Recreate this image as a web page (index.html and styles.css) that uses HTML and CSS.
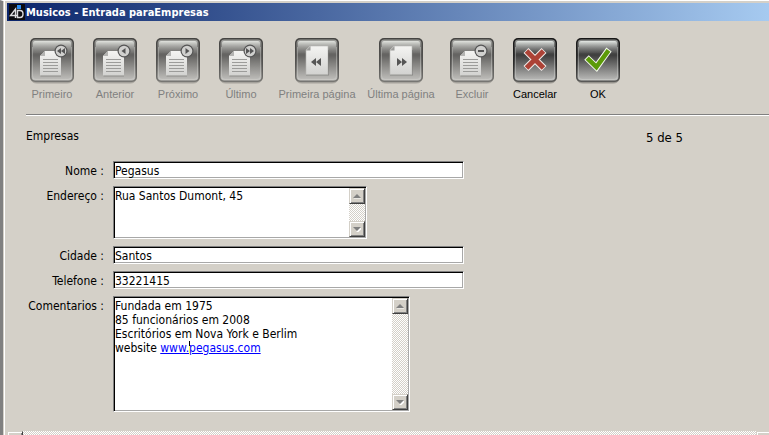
FILE: index.html
```html
<!DOCTYPE html>
<html lang="pt">
<head>
<meta charset="UTF-8" />
<meta name="viewport" content="width=device-width, initial-scale=1" />
<title>Musicos - Entrada paraEmpresas</title>
<link rel="stylesheet" href="styles.css">
</head>
<body>

<!-- shared icon parts -->
<svg class="defs" width="0" height="0" aria-hidden="true">
  <defs>
    <linearGradient id="rim" x1="0" y1="0" x2="0" y2="1">
      <stop offset="0" stop-color="#161616"/>
      <stop offset=".6" stop-color="#2c2c2c"/>
      <stop offset="1" stop-color="#5a5a58"/>
    </linearGradient>
    <linearGradient id="face" x1="0" y1="0" x2="0" y2="1">
      <stop offset="0" stop-color="#8a8c8a"/>
      <stop offset=".38" stop-color="#3e3e3e"/>
      <stop offset="1" stop-color="#bcbcba"/>
    </linearGradient>
    <linearGradient id="shine" x1="0" y1="0" x2="0" y2="1">
      <stop offset="0" stop-color="#e4e8e4"/>
      <stop offset="1" stop-color="#6a6a6a" stop-opacity=".2"/>
    </linearGradient>
    <linearGradient id="paper" x1="0" y1="0" x2="0" y2="1">
      <stop offset="0" stop-color="#f4f4f2"/>
      <stop offset="1" stop-color="#d2d2d0"/>
    </linearGradient>
    <symbol id="tile" viewBox="0 0 44 46">
      <rect x="1" y="3" width="42" height="43" rx="6" fill="#000" opacity=".14"/>
      <rect x="0" y="1" width="44" height="44" rx="6" fill="#000" opacity=".18"/>
      <rect width="44" height="44" rx="5" fill="url(#rim)"/>
      <rect x="1.5" y="1.5" width="41" height="41" rx="4" fill="url(#face)"/>
      <path d="M3 15V5q0-2 2-2h34q2 0 2 2v10z" fill="url(#shine)"/>
      <path d="M2.5 9v29q0 3.500 3.500 3.500h32q3.500 0 3.500-3.500V9" fill="none" stroke="#d8dad6" stroke-opacity=".4"/>
    </symbol>
    <symbol id="sheet" viewBox="0 0 44 46">
      <path d="M10.500 38.500v-20l5-5.500h15.500v25.500z" fill="#000" opacity=".2"/>
      <path d="M10 37.500V18l5-5h16v24.500z" fill="url(#paper)"/>
      <path d="M10 18l5-5v5z" fill="#b4b4b2"/>
      <path d="M13 21.500h15M13 24.500h15M13 27.500h15M13 30.500h15M13 33.500h15" stroke="#9c9c9a"/>
    </symbol>
    <symbol id="page" viewBox="0 0 44 46">
      <path d="M11 37.500V12h23v25.500z" fill="#000" opacity=".2"/>
      <path d="M11 36.500V12l4-4h18v28.500z" fill="url(#paper)" stroke="#b8b8b6" stroke-width=".6"/>
      <path d="M11 12.500l4.500-4.500v4.500z" fill="#9c9c9a"/>
    </symbol>
    <symbol id="badge" viewBox="0 0 44 46">
      <circle cx="31" cy="13" r="6.500" fill="#555"/>
      <circle cx="31" cy="13" r="5.300" fill="#d0d0ce"/>
    </symbol>
  </defs>
</svg>

<div class="window">
  <header class="titlebar">
    <svg class="logo" width="16" height="16" viewBox="0 0 16 16" aria-hidden="true">
      <rect width="16" height="16" fill="#0c0c10"/>
      <rect x="8" y="1" width="4" height="4" fill="#2a8cf0"/>
      <path d="M6.500 14V5L1.500 11.500H8M8.500 6.500h2.500q3 0 3 3.500t-3 3.500H8.500z" fill="none" stroke="#dcdce0" stroke-width="1.400"/>
    </svg>
    <h1>Musicos - Entrada paraEmpresas</h1>
  </header>

  <nav class="toolbar">
    <button class="tool" disabled>
      <svg width="44" height="46" viewBox="0 0 44 46"><use class="tile" href="#tile"/><use href="#sheet"/><use href="#badge"/><path d="M31 10v6l-4-3zM35 10v6l-4-3z" fill="#555"/></svg>
      <span>Primeiro</span>
    </button>
    <button class="tool" disabled>
      <svg width="44" height="46" viewBox="0 0 44 46"><use class="tile" href="#tile"/><use href="#sheet"/><use href="#badge"/><path d="M32.500 10v6l-4-3z" fill="#555"/></svg>
      <span>Anterior</span>
    </button>
    <button class="tool" disabled>
      <svg width="44" height="46" viewBox="0 0 44 46"><use class="tile" href="#tile"/><use href="#sheet"/><use href="#badge"/><path d="M29.500 10v6l4-3z" fill="#555"/></svg>
      <span>Próximo</span>
    </button>
    <button class="tool" disabled>
      <svg width="44" height="46" viewBox="0 0 44 46"><use class="tile" href="#tile"/><use href="#sheet"/><use href="#badge"/><path d="M27 10v6l4-3zM31 10v6l4-3z" fill="#555"/></svg>
      <span>Último</span>
    </button>
    <button class="tool" disabled>
      <svg width="44" height="46" viewBox="0 0 44 46"><use class="tile" href="#tile"/><use href="#page"/><path d="M21 20v8l-5-4zM26 20v8l-5-4z" fill="#555"/></svg>
      <span>Primeira página</span>
    </button>
    <button class="tool" disabled>
      <svg width="44" height="46" viewBox="0 0 44 46"><use class="tile" href="#tile"/><use href="#page"/><path d="M18 20v8l5-4zM23 20v8l5-4z" fill="#555"/></svg>
      <span>Última página</span>
    </button>
    <button class="tool" disabled>
      <svg width="44" height="46" viewBox="0 0 44 46"><use class="tile" href="#tile"/><use href="#sheet"/><use href="#badge"/><path d="M28 13h6" stroke="#555" stroke-width="2"/></svg>
      <span>Excluir</span>
    </button>
    <button class="tool">
      <svg width="44" height="46" viewBox="0 0 44 46"><use class="tile" href="#tile"/><path d="M13 12.500l18 18M31 12.500l-18 18" stroke="#f4eeec" stroke-width="7"/><path d="M13.500 13l17 17M30.500 13l-17 17" stroke="#ac4236" stroke-width="5"/></svg>
      <span>Cancelar</span>
    </button>
    <button class="tool">
      <svg width="44" height="46" viewBox="0 0 44 46"><use class="tile" href="#tile"/><path d="M10.500 19.500l10 9.500L33 11.500" fill="none" stroke="#f4f8ee" stroke-width="6.500"/><path d="M11.200 20.200l9.200 8.800L32.500 12.300" fill="none" stroke="#5c9a08" stroke-width="4.600"/></svg>
      <span>OK</span>
    </button>
  </nav>

  <main>
    <div class="heading">
      <h2>Empresas</h2>
      <span class="counter">5 de 5</span>
    </div>

    <form class="fields">
      <label for="nome">Nome :</label>
      <input class="box line" type="text" id="nome" value="Pegasus">

      <label for="endereco">Endereço :</label>
      <div class="box address">
        <textarea id="endereco">Rua Santos Dumont, 45</textarea>
        <div class="scroll">
          <button type="button" class="arrow" aria-label="Subir"><svg width="8" height="5" viewBox="0 0 8 5"><path d="M1 5h7" stroke="#fff"/><path d="M0 4l4-4 4 4z" fill="#808080"/></svg></button>
          <button type="button" class="arrow" aria-label="Descer"><svg width="8" height="5" viewBox="0 0 8 5"><path d="M4 5l4-4" stroke="#fff" stroke-width="2"/><path d="M0 0h8L4 4z" fill="#808080"/></svg></button>
        </div>
      </div>

      <label for="cidade">Cidade :</label>
      <input class="box line" type="text" id="cidade" value="Santos">

      <label for="telefone">Telefone :</label>
      <input class="box line" type="text" id="telefone" value="33221415">

      <label id="comentarios">Comentarios :</label>
      <div class="box comments">
        <div class="rich" contenteditable="true" role="textbox" aria-multiline="true" aria-labelledby="comentarios">
          <p>Fundada em 1975</p>
          <p>85 funcionários em 2008</p>
          <p>Escritórios em Nova York e Berlim</p>
          <p>website <a href="http://www.pegasus.com">www.<span class="caret"></span>pegasus.com</a></p>
        </div>
        <div class="scroll">
          <button type="button" class="arrow" aria-label="Subir"><svg width="8" height="5" viewBox="0 0 8 5"><path d="M1 5h7" stroke="#fff"/><path d="M0 4l4-4 4 4z" fill="#808080"/></svg></button>
          <button type="button" class="arrow" aria-label="Descer"><svg width="8" height="5" viewBox="0 0 8 5"><path d="M4 5l4-4" stroke="#fff" stroke-width="2"/><path d="M0 0h8L4 4z" fill="#808080"/></svg></button>
        </div>
      </div>
    </form>
  </main>

  <div class="scroll bottom">
    <button type="button" class="arrow" aria-label="Esquerda"></button>
    <button type="button" class="arrow" aria-label="Direita"></button>
  </div>
</div>

</body>
</html>
```
FILE: styles.css
```css
* {
  box-sizing: border-box;
}
body {
  margin: 0;
  height: 100vh;
  overflow: hidden;
  background: #d4d0c8;
  color: #000;
  font-family: "DejaVu Sans Condensed", Tahoma, sans-serif;
  font-size: 12px;
  line-height: 14px;
}
h1, h2, p {
  margin: 0;
}
button, input, textarea {
  font: inherit;
  color: inherit;
}
.defs {
  position: absolute;
}
.window {
  min-height: 100vh;
  border-left: 3px solid #808080;
  border-top: 1px solid #fff;
  padding: 2px 0 0 4px;
  box-shadow: inset 1px 0 #d4d0c8, inset 2px 0 #fff;
}

/* title bar */
.titlebar {
  display: flex;
  align-items: center;
  gap: 1px;
  height: 18px;
  padding-left: 2px;
  background: linear-gradient(to right, #0a246a, #a6caf0);
}
.titlebar h1 {
  padding-top: 2px;
  color: #fff;
  font-size: 11px;
  font-weight: bold;
}

/* toolbar */
.toolbar {
  display: grid;
  grid-template-columns: repeat(4, 62px) 88px 78px repeat(3, 62px);
  column-gap: 1px;
  margin-left: 14px;
  padding: 17px 0 13px 0;
}
.tool {
  display: flex;
  flex-direction: column;
  align-items: center;
  gap: 3px;
  padding: 0;
  border: none;
  background: none;
  font-family: "Liberation Sans", Arial, sans-serif;
  font-size: 11px;
  white-space: nowrap;
}
.tool:disabled {
  color: #808080;
}
.tool:disabled .tile {
  opacity: 0.75;
}

/* record */
.heading {
  display: flex;
  margin-left: 19px;
  padding-top: 14px;
  border-top: 1px solid #808080;
  box-shadow: inset 0 1px #fff;
}
.heading h2 {
  flex: 0 0 620px;
  font-size: 12px;
  font-weight: normal;
}
.counter {
  font-size: 13px;
  line-height: 18px;
}
.fields {
  display: grid;
  grid-template-columns: 79px auto;
  justify-content: start;
  justify-items: start;
  gap: 7px 9px;
  margin-left: 18px;
  padding: 14px 0 19px 0;
}
.fields label {
  justify-self: end;
  padding-top: 3px;
  white-space: nowrap;
}
.box {
  border: 1px solid;
  border-color: #808080 #fff #fff #808080;
  border-radius: 0;
  background: #fff;
  box-shadow: inset 1px 1px #000, inset -1px -1px #a8a8a8;
  outline: none;
}
.line {
  width: 351px;
  height: 18px;
  padding: 2px 1px 0 1px;
}
.address,
.comments {
  display: flex;
  padding: 1px;
}
.address {
  width: 254px;
  height: 53px;
}
.comments {
  width: 297px;
  height: 116px;
}
.address textarea,
.rich {
  flex: 1;
  padding: 1px 0 0 0;
  border: none;
  background: none;
  outline: none;
  resize: none;
  overflow: hidden;
}
.rich a {
  color: #0000ff;
}
.caret {
  position: relative;
}
.caret::after {
  content: "";
  position: absolute;
  left: 0;
  top: 0;
  width: 1px;
  height: 13px;
  background: linear-gradient(#000 5px, #ffff60 5px);
}

/* scroll bars */
.scroll {
  display: flex;
  flex-direction: column;
  justify-content: space-between;
  width: 16px;
  background: repeating-conic-gradient(#d4d0c8 0 25%, #fff 0 50%) 0 0 / 2px 2px;
}
.arrow {
  display: flex;
  align-items: center;
  justify-content: center;
  width: 16px;
  height: 16px;
  padding: 0;
  border: 1px solid;
  border-color: #d4d0c8 #404040 #404040 #d4d0c8;
  background: #d4d0c8;
  box-shadow: inset 1px 1px #fff, inset -1px -1px #808080;
}
/* runs on under the window's right edge */
.bottom {
  flex-direction: row;
  width: auto;
  margin-right: -3px;
}
```
